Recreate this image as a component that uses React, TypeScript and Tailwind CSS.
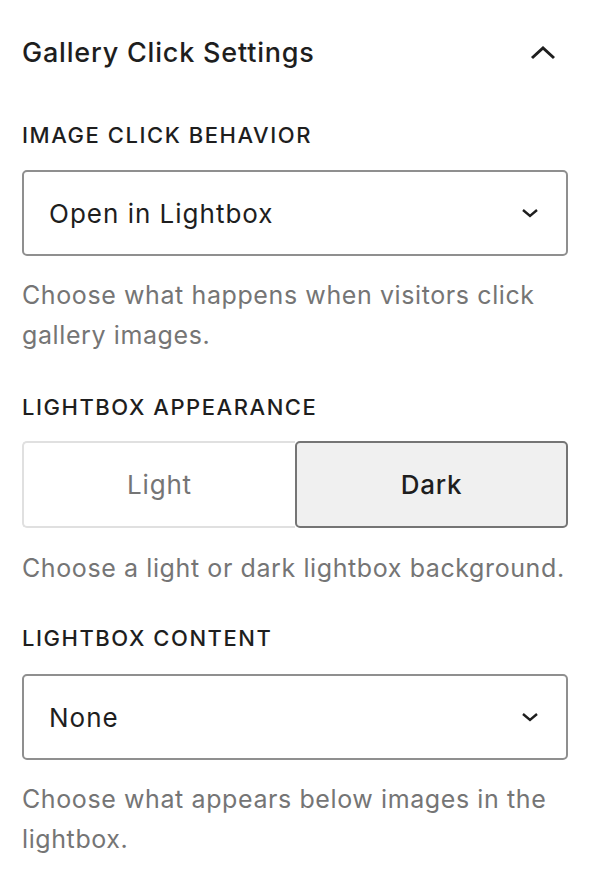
import React from "react";

function ChevronDown() {
  return (
    <svg width="20" height="12" viewBox="0 0 20 12" fill="none">
      <path d="M3 3l7 6 7-6" stroke="#1e1e1e" strokeWidth="2.4" />
    </svg>
  );
}

function ChevronUp() {
  return (
    <svg width="26" height="14" viewBox="0 0 26 14" fill="none">
      <path d="M2 12L13 2l11 10" stroke="#1e1e1e" strokeWidth="3" />
    </svg>
  );
}

function Label({ children }: { children: React.ReactNode }) {
  return (
    <div className="text-[22px] leading-[28px] font-medium uppercase text-[#1e1e1e] tracking-[1.55px]">
      {children}
    </div>
  );
}

function Select({ value }: { value: string }) {
  return (
    <div className="flex items-center justify-between h-[86px] border-2 border-[#8f8f8f] rounded-[5px] pl-[25px] pr-[26px] bg-white">
      <span className="text-[26px] tracking-[1px] text-[#1e1e1e]">{value}</span>
      <ChevronDown />
    </div>
  );
}

function Help({ children }: { children: React.ReactNode }) {
  return <div className="text-[25px] leading-[40px] tracking-[0.6px] text-[#757575]">{children}</div>;
}

export default function App() {
  return (
    <div
      className="w-[600px] h-[887px] bg-white pl-[22px] pr-[32px] pt-[36px]"
      style={{ fontFamily: "Inter, 'Noto Sans', sans-serif" }}
    >
      <div className="flex items-center justify-between h-[34px]">
        <span className="text-[27px] font-medium tracking-[0.8px] text-[#1e1e1e] leading-[34px]">Gallery Click Settings</span>
        <span className="mr-[12px] flex items-center">
          <ChevronUp />
        </span>
      </div>

      <div className="mt-[51px]">
        <Label>Image click behavior</Label>
      </div>
      <div className="mt-[21px]">
        <Select value="Open in Lightbox" />
      </div>
      <div className="mt-[19px]">
        <Help>Choose what happens when visitors click gallery images.</Help>
      </div>

      <div className="mt-[38px]">
        <Label>Lightbox appearance</Label>
      </div>
      <div className="mt-[20px] grid grid-cols-2 h-[87px]">
        <div className="flex items-center justify-center border-2 border-r-0 border-[#e0e0e0] rounded-l-[5px] bg-white text-[26px] tracking-[0.8px] text-[#757575]">
          Light
        </div>
        <div className="flex items-center justify-center border-2 border-[#757575] rounded-[5px] bg-[#f0f0f0] text-[26px] tracking-[0.8px] font-medium text-[#1e1e1e]">
          Dark
        </div>
      </div>
      <div className="mt-[20px]">
        <Help>Choose a light or dark lightbox background.</Help>
      </div>

      <div className="mt-[36px]">
        <Label>Lightbox content</Label>
      </div>
      <div className="mt-[22px]">
        <Select value="None" />
      </div>
      <div className="mt-[19px]">
        <Help>Choose what appears below images in the lightbox.</Help>
      </div>
    </div>
  );
}
